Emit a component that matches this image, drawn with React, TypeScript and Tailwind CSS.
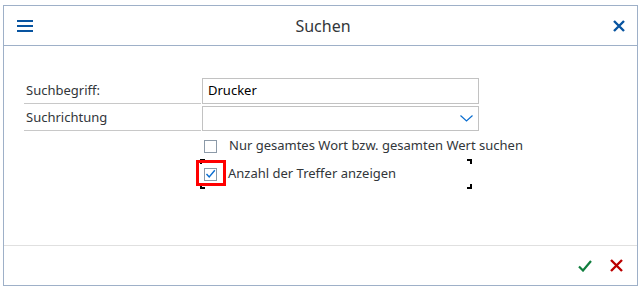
import React from "react";

const font = { fontFamily: '"Noto Sans", "Open Sans", sans-serif' };

function Corner({ className }: { className: string }) {
  return <span className={`absolute w-[5px] h-[5px] border-[#000] ${className}`} />;
}

export default function App() {
  return (
    <div className="w-[641px] h-[290px] bg-white pt-[5px] pl-[3px]" style={font}>
      <div className="w-[635px] h-[281px] border border-[#9eb0c8] flex flex-col">
        {/* header */}
        <div className="h-[40px] border-b border-[#9eb0c8] flex items-center pl-[13px] pr-[12px] relative">
          <svg width="16" height="12" viewBox="0 0 16 12" className="shrink-0">
            <rect x="0" y="0" width="16" height="2" fill="#0854a0" />
            <rect x="0" y="5" width="16" height="2" fill="#0854a0" />
            <rect x="0" y="10" width="16" height="2" fill="#0854a0" />
          </svg>
          <div className="flex-1 text-center text-[16px] text-[#32363a]">Suchen</div>
          <svg width="12" height="12" viewBox="0 0 12 12" className="shrink-0">
            <path d="M1 1 L11 11 M11 1 L1 11" stroke="#0854a0" strokeWidth="2.4" strokeLinecap="butt" />
          </svg>
        </div>

        {/* content */}
        <div className="flex-1 pt-[32px] pl-[20px] text-[13px] text-[#32363a]">
          <div className="flex h-[26px]">
            <div className="w-[177px] border-b border-[#c8c8c8] pl-[2px] flex items-center">Suchbegriff:</div>
            <div className="w-[277px] ml-[1px] border border-[#c2c2c2] flex items-center pl-[5px] text-[#000]">
              Drucker
            </div>
          </div>
          <div className="flex h-[25px] mt-[2px]">
            <div className="w-[177px] border-b border-[#c8c8c8] pl-[2px] flex items-center">Suchrichtung</div>
            <div className="w-[277px] ml-[1px] border border-[#c2c2c2] flex items-center justify-end pr-[5px]">
              <svg width="13" height="7" viewBox="0 0 13 7">
                <path d="M0.5 0.5 L6.5 6 L12.5 0.5" stroke="#0a6ed1" strokeWidth="1.2" fill="none" />
              </svg>
            </div>
          </div>

          <div className="ml-[180px] mt-[8px] flex items-center h-[14px]">
            <span className="w-[13px] h-[13px] border border-[#8c9aa8] bg-white" />
            <span className="ml-[12px]">Nur gesamtes Wort bzw. gesamten Wert suchen</span>
          </div>

          <div className="ml-[176px] mt-[6px] relative w-[272px] h-[30px] flex items-center">
            <Corner className="left-0 top-0 border-l-2 border-t-2" />
            <Corner className="right-0 top-0 border-r-2 border-t-2" />
            <Corner className="left-0 bottom-0 border-l-2 border-b-2" />
            <Corner className="right-0 bottom-0 border-r-2 border-b-2" />
            <span className="ml-[4px] w-[13px] h-[13px] border border-[#8c9aa8] bg-white flex items-center justify-center">
              <svg width="11" height="10" viewBox="0 0 11 10">
                <path d="M1.5 5 L4.2 8 L9.8 1.2" stroke="#0a6ed1" strokeWidth="1.4" fill="none" />
              </svg>
            </span>
            <span className="ml-[11px]">Anzahl der Treffer anzeigen</span>
            <span className="absolute left-[-4px] top-[1px] w-[30px] h-[26px] border-[3px] border-[#ff0000]" />
          </div>
        </div>

        {/* footer */}
        <div className="h-[40px] border-t border-[#e0e0e0] flex items-center justify-end gap-[18px] pr-[14px]">
          <svg width="14" height="12" viewBox="0 0 14 12">
            <path d="M1 6.5 L5 10.5 L13 1" stroke="#107e3e" strokeWidth="2.2" fill="none" />
          </svg>
          <svg width="13" height="13" viewBox="0 0 13 13">
            <path d="M1 1 L12 12 M12 1 L1 12" stroke="#bb0000" strokeWidth="2.4" fill="none" />
          </svg>
        </div>
      </div>
    </div>
  );
}
